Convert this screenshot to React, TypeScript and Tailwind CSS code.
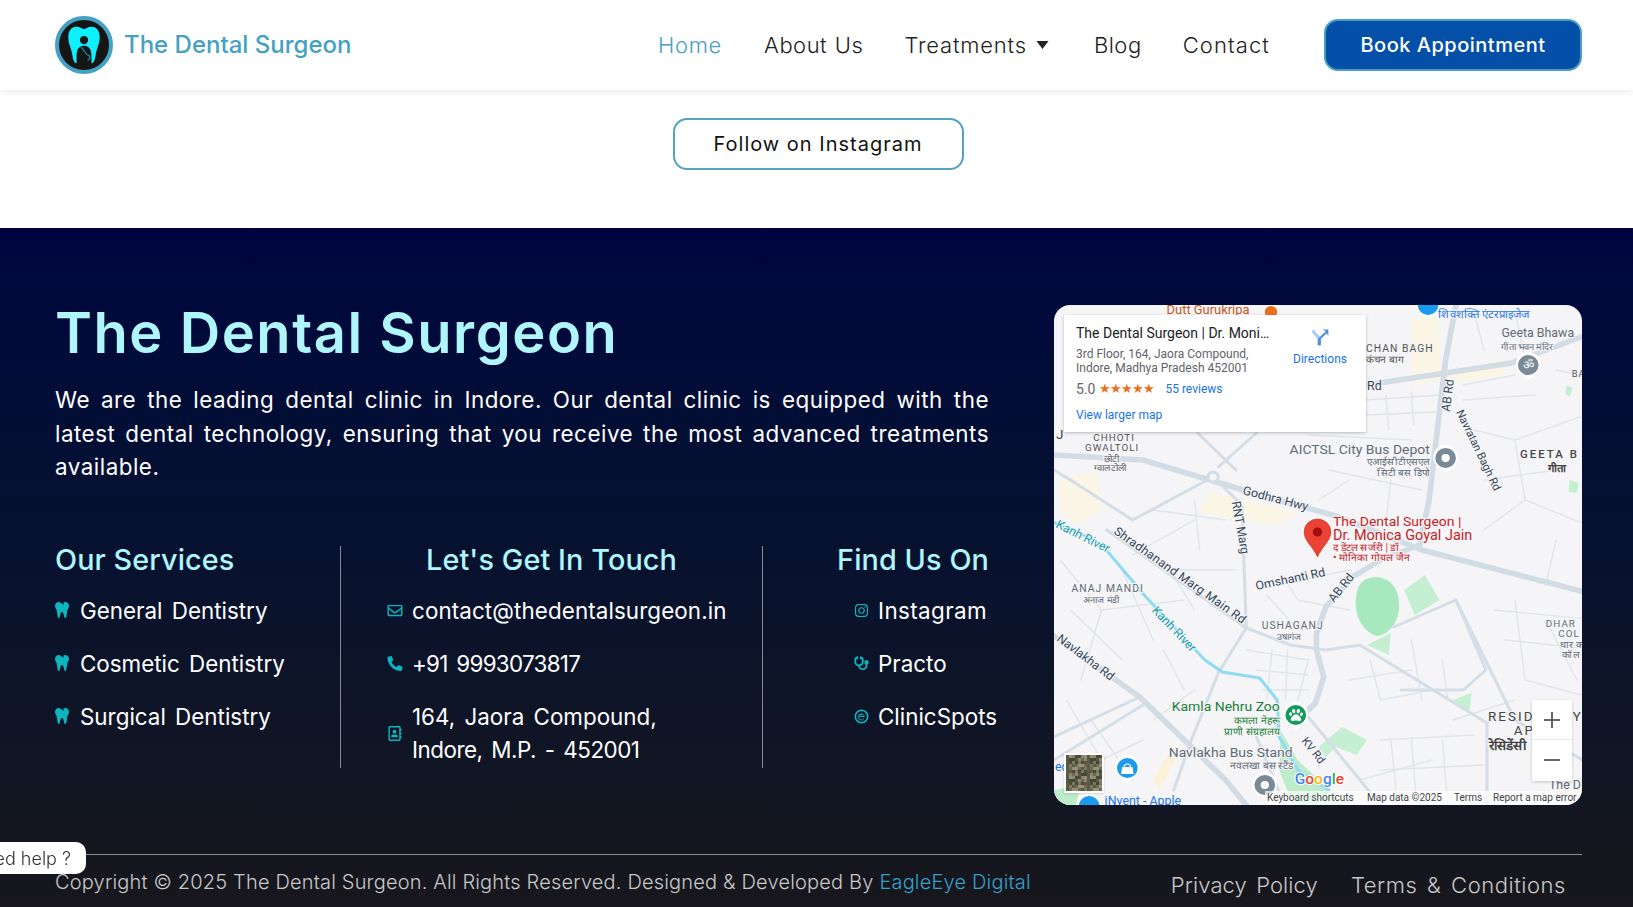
import React from "react";
import { Stethoscope } from "lucide-react";
import { FaInstagram, FaPhoneAlt, FaRegAddressBook, FaRegEnvelope, FaTooth, FaPaw } from "react-icons/fa";

const mainRoads = [
  "M1443 305 L1433 360 L1417 500 L1408 545",
  "M1054 455 L1140 460 L1237 490 L1330 517 L1410 550 L1582 596",
  "M1408 545 L1370 560 L1343 577 L1317 607 L1308 633 L1308 650 L1315 677 L1307 703 L1297 713",
  "M1356 385 L1497 363 L1582 330",
  "M1054 636 L1137 697 L1220 780 L1240 805",
];

const midRoads = [
  "M1105 530 L1240 628 L1283 645 L1317 650 L1350 645 L1473 723 L1473 805",
  "M1240 628 L1213 673 L1187 740 L1170 790",
  "M1250 737 L1277 805",
  "M1054 737 L1137 697",
  "M1054 760 L1140 705",
  "M1193 433 L1230 470 M1250 433 L1213 467",
  "M1208 477 L1130 520 L1070 480 L1054 470",
  "M1208 477 L1236 505 L1240 628",
  "M1383 627 L1443 600 L1472 670 L1450 690 L1390 690",
  "M1297 713 L1370 805",
  "M1443 600 L1500 720 L1582 770",
];

const thinRoads = [
  "M1250 589 L1340 570 M1260 595 L1290 630 M1290 600 L1340 610 M1275 575 L1290 600",
  "M1060 560 L1100 610 L1080 680 M1100 610 L1180 600 M1120 570 L1150 640 M1070 610 L1120 660 M1160 560 L1190 610",
  "M1240 650 L1300 660 L1290 700 M1250 670 L1300 675 M1255 690 L1300 690 M1265 650 L1260 700 M1280 650 L1278 700",
  "M1360 660 L1370 700 L1420 690 M1400 640 L1410 700 M1430 660 L1435 700 M1340 680 L1400 670",
  "M1370 740 L1460 735 M1400 740 L1405 805 M1430 740 L1435 805 M1370 770 L1470 765 M1380 740 L1385 790",
  "M1500 600 L1510 680 L1582 700 M1530 620 L1560 680 M1490 640 L1582 650 M1480 610 L1582 620",
  "M1356 400 L1430 395 M1375 395 L1378 430 M1400 392 L1402 425 M1356 415 L1425 412",
  "M1460 430 L1500 440 L1510 500 L1470 530 M1500 440 L1582 410 M1470 480 L1540 470 M1450 400 L1520 395",
  "M1320 470 L1410 490 M1340 480 L1310 500 M1380 480 L1375 525 M1300 435 L1400 440",
  "M1130 555 L1190 520 M1170 570 L1230 570 M1150 510 L1220 520 M1190 500 L1195 550",
  "M1066 700 L1100 760 L1140 740 M1090 720 L1130 780 M1150 720 L1190 690 M1160 650 L1180 690",
  "M1440 720 L1500 700 M1350 780 L1420 760 M1510 500 L1582 530 M1540 540 L1530 585",
  "M1460 310 L1470 350 M1500 310 L1510 360 M1540 370 L1582 380 M1450 385 L1500 375",
];

type LabelProps = {
  x: number;
  y: number;
  size?: number;
  fill?: string;
  weight?: number;
  spacing?: number;
  rotate?: number;
  end?: boolean;
  children: React.ReactNode;
};

// map labels sit at their spot on the tile, halo keeps them readable over the roads
const Label = ({ x, y, size = 11, fill = "#5f6b76", weight = 400, spacing = 0, rotate = 0, end = false, children }: LabelProps) => (
  <text
    x={x}
    y={y}
    fontSize={size}
    fill={fill}
    fontWeight={weight}
    letterSpacing={spacing}
    textAnchor={end ? "end" : "start"}
    transform={rotate ? `rotate(${rotate} ${x} ${y})` : undefined}
    stroke="#f5f5f7"
    strokeWidth={2}
    paintOrder="stroke"
  >
    {children}
  </text>
);

const Pin = ({ x, y, color }: { x: number; y: number; color: string }) => (
  <g>
    <path d={`M${x} ${y + 15} L${x - 9} ${y + 7} A12 12 0 1 1 ${x + 9} ${y + 7} Z`} fill="#fff" />
    <circle cx={x} cy={y} r={10} fill={color} />
  </g>
);

const ThumbNoise = () => {
  const cells = [];
  const colors = ["#5c5a45", "#7d7760", "#3f4a35", "#8c8570", "#6a6f52", "#4c4a3a", "#9a8f78"];
  for (let r = 0; r < 12; r++) {
    for (let c = 0; c < 12; c++) {
      cells.push(<rect key={`${r}-${c}`} x={c * 3} y={r * 3} width={3} height={3} fill={colors[(r * r * 7 + c * c * 13 + r * c * 3) % 7]} />);
    }
  }
  return (
    <svg viewBox="0 0 36 36" className="h-full w-full">
      {cells}
    </svg>
  );
};

const MapEmbed = () => (
  <div className="relative h-[500px] w-[528px] shrink-0 overflow-hidden rounded-2xl bg-[#f5f5f7] font-[Roboto,sans-serif]">
    <svg viewBox="1054 305 511 500" preserveAspectRatio="none" className="absolute inset-0 h-full w-full">
      {/* land use */}
      <path d="M1060 480 L1095 472 L1100 510 L1075 525 L1060 510 Z" fill="#fbf5e6" />
      <path d="M1205 492 L1290 512 L1270 525 L1195 512 Z" fill="#fbf5e6" />
      <path d="M1400 320 L1425 310 L1430 380 L1400 385 Z" fill="#fbf5e6" />
      <path d="M1430 370 L1490 360 L1490 375 L1430 385 Z" fill="#fbf5e6" />
      <path d="M1150 780 L1170 745 L1176 750 L1156 790 Z" fill="#fbf0d8" />
      <path d="M1346 600 C1347 585 1352 578 1365 577 C1380 578 1388 588 1388 606 C1388 622 1378 635 1366 636 C1354 632 1345 618 1346 600 Z" fill="#a8e8bf" />
      <path d="M1393 590 L1413 575 L1427 600 L1403 615 Z" fill="#c5efd2" />
      <path d="M1357 645 L1380 633 L1378 655 Z" fill="#c5efd2" />
      <path d="M1273 730 L1290 760 L1335 805 L1285 805 L1272 770 Z" fill="#bdeccb" />
      <path d="M1310 747 L1333 727 L1357 740 L1347 755 L1327 747 L1317 757 Z" fill="#c5efd2" />
      <path d="M1054 790 L1080 785 L1075 805 L1054 805 Z" fill="#bdeccb" />
      <path d="M1440 700 L1458 693 L1456 712 Z" fill="#c5efd2" />
      <path d="M1550 385 L1556 388 L1553 397 L1549 394 Z M1553 480 L1562 483 L1560 493 L1552 492 Z" fill="#c5efd2" />

      <g fill="none" strokeLinecap="round" strokeLinejoin="round">
        {thinRoads.map((d) => (
          <path key={d} d={d} stroke="#dfe5ea" strokeWidth={1.4} />
        ))}
        {midRoads.map((d) => (
          <path key={d} d={d} stroke="#d5dee6" strokeWidth={3} />
        ))}
        {mainRoads.map((d) => (
          <path key={d} d={d} stroke="#d2dce5" strokeWidth={5.5} />
        ))}
        <circle cx={1208} cy={477} r={5} stroke="#d2dce5" strokeWidth={3} fill="#f5f5f7" />
        <path
          d="M1053 522 L1093 540 L1107 553 L1143 597 L1200 660 L1217 672 L1253 678 L1270 700 L1272 737 L1290 770 L1320 790"
          stroke="#8fdcf2"
          strokeWidth={3}
        />
      </g>

      <Label x={1163} y={314} size={12.5} fill="#c5591c">Dutt Gurukripa</Label>
      <circle cx={1264} cy={312} r={6} fill="#e8711a" />
      <Label x={1426} y={318} size={11} fill="#1a73e8">शिवशक्ति एंटरप्राइजेज</Label>
      <Label x={1356} y={352} size={10} spacing={1} fill="#555">CHAN BAGH</Label>
      <Label x={1356} y={363} size={10} fill="#555">कंचन बाग</Label>
      <Label x={1487} y={337} size={12}>Geeta Bhawa</Label>
      <Label x={1487} y={350} size={9}>गीता भवन मंदिर</Label>
      <Label x={1555} y={377} size={9} spacing={1} fill="#555">BA</Label>
      <Label x={1357} y={390} size={12} fill="#33475b">Rd</Label>
      <Label x={1437} y={412} size={12} rotate={-83} fill="#33475b">AB Rd</Label>
      <Label x={1443} y={412} size={11} rotate={65} fill="#33475b">Navratan Bagh Rd</Label>
      <Label x={1282} y={454} size={13.5}>AICTSL City Bus Depot</Label>
      <Label x={1418} y={465} size={9.5} end>एआईसीटीएसएल</Label>
      <Label x={1418} y={476} size={9.5} end>सिटी बस डिपो</Label>
      <Label x={1505} y={458} size={11} spacing={2} fill="#444" weight={500}>GEETA B</Label>
      <Label x={1532} y={472} size={11} fill="#444" weight={700}>गीता</Label>
      <Label x={1092} y={441} size={9.5} spacing={1} fill="#555">CHHOTI</Label>
      <Label x={1084} y={451} size={9.5} spacing={1} fill="#555">GWALTOLI</Label>
      <Label x={1102} y={462} size={9} fill="#555">छोटी</Label>
      <Label x={1093} y={471} size={9} fill="#555">ग्वालटोली</Label>
      <Label x={1056} y={439} size={13} fill="#444">J</Label>
      <Label x={1236} y={494} size={12} rotate={15} fill="#33475b">Godhra Hwy</Label>
      <Label x={1226} y={502} size={12} rotate={80} fill="#33475b">RNT Marg</Label>
      <Label x={1055} y={527} size={12} rotate={27} fill="#129eaf">Kanh River</Label>
      <Label x={1111} y={533} size={12} rotate={36} fill="#33475b" spacing={0.3}>Shradhanand Marg Main Rd</Label>
      <Label x={1250} y={590} size={12} rotate={-12} fill="#33475b">Omshanti Rd</Label>
      <Label x={1325} y={603} size={12} rotate={-52} fill="#33475b">AB Rd</Label>
      <Label x={1071} y={592} size={10} spacing={1}>ANAJ MANDI</Label>
      <Label x={1082} y={603} size={9}>अनाज मंडी</Label>
      <Label x={1255} y={629} size={10} spacing={1}>USHAGANJ</Label>
      <Label x={1270} y={640} size={9}>उषागंज</Label>
      <Label x={1530} y={627} size={9.5} spacing={1}>DHAR</Label>
      <Label x={1542} y={637} size={9.5} spacing={1}>COL</Label>
      <Label x={1544} y={648} size={9.5}>धार क</Label>
      <Label x={1546} y={658} size={9.5}>कॉल</Label>
      <Label x={1148} y={611} size={12} rotate={47} fill="#129eaf">Kanh River</Label>
      <Label x={1056} y={640} size={12} rotate={38} fill="#33475b">Navlakha Rd</Label>
      <Label x={1168} y={711} size={13.5} fill="#188038">Kamla Nehru Zoo</Label>
      <Label x={1273} y={724} size={10} end fill="#188038">कमला नेहरू</Label>
      <Label x={1273} y={735} size={10} end fill="#188038">प्राणी संग्रहालय</Label>
      <Label x={1293} y={741} size={11} rotate={52} fill="#33475b">KV Rd</Label>
      <Label x={1474} y={721} size={13} spacing={2} fill="#444">RESID</Label>
      <Label x={1556} y={721} size={13} fill="#444">Y</Label>
      <Label x={1499} y={735} size={13} spacing={2} fill="#444">AP</Label>
      <Label x={1475} y={750} size={13} fill="#444" weight={700}>रेसिडेंसी</Label>
      <Label x={1533} y={789} size={12}>The D</Label>
      <Label x={1165} y={757} size={13.5}>Navlakha Bus Stand</Label>
      <Label x={1285} y={769} size={10} end>नवलखा बस स्टैंड</Label>
      <Label x={1055} y={771} size={12} fill="#1a73e8">ed s</Label>
      <Label x={1103} y={805} size={12} fill="#1a73e8">iNvent - Apple</Label>

      <Pin x={1513} y={365} color="#7b8a97" />
      <text x={1513} y={369} fontSize={12} fill="#fff" textAnchor="middle">ॐ</text>
      <Pin x={1433} y={458} color="#7b8a97" />
      <circle cx={1433} cy={458} r={4} fill="#fff" />
      <Pin x={1258} y={785} color="#7b8a97" />
      <circle cx={1258} cy={785} r={4} fill="#fff" />
      <Pin x={1288} y={715} color="#109c5c" />
      <Pin x={1125} y={768} color="#1a9bf0" />
      <path d="M1120 767 h10 l1 7 h-12 Z" fill="#fff" />
      <path d="M1122 767 a3 3 0 0 1 6 0" fill="none" stroke="#fff" strokeWidth={1.2} />
      <Pin x={1088} y={806} color="#1a9bf0" />
      <Pin x={1416} y={305} color="#1a9bf0" />

      {/* red place marker */}
      <path d="M1309 557 C1305 547 1296 541 1296 532 A13 13 0 1 1 1322 532 C1322 541 1313 547 1309 557 Z" fill="#ea4335" stroke="#c5221f" strokeWidth={0.5} />
      <circle cx={1309} cy={532} r={4.5} fill="#a50e0e" />
      <Label x={1324} y={526} size={13.5} fill="#c5221f">The Dental Surgeon |</Label>
      <Label x={1324} y={540} size={14} fill="#c5221f">Dr. Monica Goyal Jain</Label>
      <Label x={1324} y={551} size={10} fill="#c5221f">द डेंटल सर्जरी | डॉ</Label>
      <Label x={1324} y={561} size={10} fill="#c5221f">• मोनिका गोयल जैन</Label>

      <text x={1287} y={784} fontSize={15} fontWeight={500} stroke="#fff" strokeWidth={2} paintOrder="stroke">
        <tspan fill="#4285f4">G</tspan>
        <tspan fill="#ea4335">o</tspan>
        <tspan fill="#fbbc05">o</tspan>
        <tspan fill="#4285f4">g</tspan>
        <tspan fill="#34a853">l</tspan>
        <tspan fill="#ea4335">e</tspan>
      </text>
    </svg>

    <FaPaw className="absolute left-[235px] top-[403px] h-[14px] w-[14px] text-white" />

    {/* place card */}
    <div className="absolute left-[10px] top-[10px] h-[117px] w-[302px] bg-white pl-3 pt-[10px] shadow-[0_1px_3px_rgba(0,0,0,0.25)]">
      <div className="w-[196px] truncate text-[14px] leading-4 text-[#202124]">The Dental Surgeon | Dr. Monica Goyal Jain</div>
      <div className="mt-[6px] text-[12px] leading-[14px] text-[#5f6368]">
        3rd Floor, 164, Jaora Compound,
        <br />
        Indore, Madhya Pradesh 452001
      </div>
      <div className="mt-[6px] flex items-center text-[12px] leading-4">
        <span className="text-[14px] text-[#5f6368]">5.0</span>
        <span className="ml-1 text-[13px] leading-4 tracking-[-1px] text-[#e7711b]">★★★★★</span>
        <span className="ml-[11px] text-[#1a73e8]">55 reviews</span>
      </div>
      <div className="mt-[10px] text-[12px] leading-4 text-[#1a73e8]">View larger map</div>
      <div className="absolute left-[226px] top-[12px] flex w-[60px] flex-col items-center text-[12px] text-[#1a73e8]">
        <svg viewBox="0 0 24 24" className="h-5 w-5">
          <path d="M4 3 L13 13 V22 H9 V14 L2 6 Z" fill="#a8c7fa" />
          <path d="M9.5 14 L19 5 L15 3 H22 V11 L20 7.5 L13 14.5 V22 H9.5 Z" fill="#4a90e2" />
        </svg>
        <span className="mt-[3px] whitespace-nowrap">Directions</span>
      </div>
    </div>

    {/* satellite thumbnail */}
    <div className="absolute left-[10px] top-[448px] h-[40px] w-[40px] border-2 border-white shadow">
      <ThumbNoise />
    </div>

    {/* zoom buttons */}
    <div className="absolute left-[478px] top-[395px] flex h-[81px] w-[40px] flex-col items-center bg-white shadow-[0_1px_3px_rgba(0,0,0,0.2)]">
      <div className="flex h-10 w-full items-center justify-center border-b border-[#e6e6e6]">
        <svg viewBox="0 0 18 18" className="h-[18px] w-[18px]">
          <path d="M9 1 V17 M1 9 H17" stroke="#666" strokeWidth={2} />
        </svg>
      </div>
      <div className="flex h-10 w-full items-center justify-center">
        <svg viewBox="0 0 18 18" className="h-[18px] w-[18px]">
          <path d="M1 9 H17" stroke="#666" strokeWidth={2} />
        </svg>
      </div>
    </div>

    {/* attribution strip */}
    <div className="absolute bottom-0 right-0 flex h-[14px] w-[317px] items-center whitespace-nowrap bg-white/70 pl-[2px] text-[10px] leading-none text-[#444]">
      <span className="w-[100px]">Keyboard shortcuts</span>
      <span className="w-[87px]">Map data ©2025</span>
      <span className="w-[39px]">Terms</span>
      <span>Report a map error</span>
    </div>
  </div>
);

const ClinicIcon = () => (
  <svg viewBox="0 0 16 16" className="h-[15px] w-[15px] shrink-0 fill-none stroke-[#0cb6bf]">
    <circle cx="8" cy="8" r="6.6" strokeWidth="1.7" />
    <path d="M4.8 8 H11 A3.2 3.2 0 1 0 10.4 10.4 M6 6 H9" strokeWidth="1" />
  </svg>
);

const services = ["General Dentistry", "Cosmetic Dentistry", "Surgical Dentistry"];

const App: React.FC = () => {
  return (
    <div className="h-[907px] overflow-hidden bg-white font-[Inter,sans-serif]">
      {/* Header */}
      <header className="relative z-10 flex h-[90px] items-center bg-white pl-[55px] pr-[51px] shadow-[0_2px_8px_rgba(0,0,0,0.08)]">
        <div className="flex items-center gap-[11px]">
          <div className="flex h-[58px] w-[58px] items-center justify-center rounded-full border-[4px] border-[#44a1c4] bg-[#161616]">
            <svg viewBox="0 0 40 46" className="h-[38px] w-[34px]">
              <path
                d="M11 1 C15 1 17 3 20 4 C23 3 25 1 29 1 C36 1 39 7 39 14 C39 22 35 27 34 36 C33 41 32 45 29 45 C26 45 27 34 20 34 C13 34 14 45 11 45 C8 45 7 41 6 36 C5 27 1 22 1 14 C1 7 4 1 11 1 Z"
                fill="#0ff0ff"
              />
              <circle cx="20" cy="17" r="5" fill="#161616" />
              <path d="M11 36 C11 27 15 24 20 24 C25 24 29 27 29 36 L29 45 L24 45 C24 39 23 36 20 36 C17 36 16 39 16 45 L11 45 Z" fill="#161616" />
              <path d="M16 25 L24 35 M24 35 A3 3 0 1 1 24 41" stroke="#0b8fa0" strokeWidth="1.5" fill="none" />
            </svg>
          </div>
          <span className="text-[24px] font-medium text-[#44a1c4]">The Dental Surgeon</span>
        </div>

        <nav className="ml-auto flex items-center text-[22px] font-light tracking-[0.5px] text-[#222] [word-spacing:3px]">
          <a className="tracking-[0.7px] text-[#44a1c4]">Home</a>
          <a className="ml-[42px] [word-spacing:1px]">About Us</a>
          <a className="ml-[41px] flex items-center tracking-[0.8px]">
            Treatments
            <svg viewBox="0 0 12 8" className="ml-[9px] h-2 w-[13px] fill-[#222]">
              <path d="M0 0 H12 L6 8 Z" />
            </svg>
          </a>
          <a className="ml-[45px]">Blog</a>
          <a className="ml-[41px] tracking-[1.1px]">Contact</a>
          <button className="ml-[54px] h-[52px] w-[258px] rounded-[14px] border-2 border-[#4a9fc0] bg-[#0450a8] text-[20px] font-medium text-white">
            Book Appointment
          </button>
        </nav>
      </header>

      {/* Instagram CTA */}
      <section className="flex h-[138px] items-start justify-center pl-[4px] pr-[1px] pt-[28px]">
        <button className="h-[52px] w-[291px] rounded-[14px] border-2 border-[#54a3bf] bg-white text-[20px] tracking-[1px] text-[#111]">
          Follow on Instagram
        </button>
      </section>

      {/* Footer */}
      <footer className="relative h-[679px] bg-linear-to-b from-[#00053f] to-[#17171c] pl-[55px] pr-[51px] pt-[77px] text-white">
        <div className="flex justify-between">
          <div className="w-[934px]">
            <h2 className="text-[56px] font-semibold leading-[56px] tracking-[1.55px] text-[#aef6fc]">The Dental Surgeon</h2>
            <p className="mt-[22px] text-justify text-[22.4px] leading-[33.6px] tracking-[0.5px] [word-spacing:2px]">
              We are the leading dental clinic in Indore. Our dental clinic is equipped with the latest dental technology, ensuring that you receive the most advanced treatments available.
            </p>

            <div className="mt-[62px] flex h-[222px] text-[22.4px] [word-spacing:3px]">
              <div className="w-[286px] shrink-0 border-r border-[#8a8a92]">
                <h3 className="text-[28.8px] font-medium leading-[28px] tracking-[0.1px] text-[#aef6fc] [word-spacing:0]">Our Services</h3>
                {services.map((s) => (
                  <div key={s} className="mt-[20px] flex items-center gap-[11px] leading-[33px]">
                    <FaTooth className="h-4 w-[14px] text-[#0cb6bf]" />
                    {s}
                  </div>
                ))}
              </div>

              <div className="w-[422px] shrink-0 border-r border-[#8a8a92] pl-[46px]">
                <h3 className="pr-[46px] text-center text-[28.8px] font-medium leading-[28px] tracking-[0.1px] text-[#aef6fc] [word-spacing:0]">Let's Get In Touch</h3>
                <div className="mt-[20px] flex items-center gap-[9px] leading-[33px] tracking-[0.1px]">
                  <FaRegEnvelope className="h-[15px] w-4 text-[#0cb6bf]" />
                  contact@thedentalsurgeon.in
                </div>
                <div className="mt-[20px] flex items-center gap-[9px] leading-[33px] tracking-[-0.7px]">
                  <FaPhoneAlt className="h-[15px] w-4 text-[#0cb6bf]" />
                  +91 9993073817
                </div>
                <div className="mt-[20px] flex items-center gap-[9px] leading-[33.6px]">
                  <FaRegAddressBook className="h-[15px] w-4 text-[#0cb6bf]" />
                  <span>
                    164, Jaora Compound,
                    <br />
                    <span className="tracking-[-0.5px]">Indore, M.P. - 452001</span>
                  </span>
                </div>
              </div>

              <div className="min-w-0 flex-1 whitespace-nowrap">
                <h3 className="text-right text-[28.8px] font-medium leading-[28px] tracking-[0.1px] text-[#aef6fc] [word-spacing:0]">Find Us On</h3>
                <div className="mt-[20px] flex items-center gap-[9px] pl-[91px] leading-[33px] tracking-[0.4px]">
                  <FaInstagram className="h-[15px] w-[15px] text-[#0cb6bf]" />
                  Instagram
                </div>
                <div className="mt-[20px] flex items-center gap-[9px] pl-[91px] leading-[33px]">
                  <Stethoscope className="h-[15px] w-[15px] text-[#0cb6bf]" strokeWidth={3} />
                  Practo
                </div>
                <div className="mt-[20px] flex items-center gap-[9px] pl-[91px] leading-[33px]">
                  <ClinicIcon />
                  ClinicSpots
                </div>
              </div>
            </div>
          </div>

          <MapEmbed />
        </div>

        <div className="mt-[49px] border-t border-[#8a8a8a]" />
        <div className="flex items-start justify-between pr-[16px] pt-[12px] text-[#c8c8c8]">
          <p className="text-[20px] font-light leading-[30px] tracking-[0.18px]">
            Copyright © 2025 The Dental Surgeon. All Rights Reserved. Designed &amp; Developed By <a className="text-[#3a9fc8]">EagleEye Digital</a>
          </p>
          <div className="mt-[2px] flex gap-[33px] text-[22px] font-light leading-[33px] [word-spacing:3px]">
            <a className="tracking-[0.1px]">Privacy Policy</a>
            <a className="tracking-[0.55px]">Terms &amp; Conditions</a>
          </div>
        </div>
      </footer>

      {/* help bubble, pushed half off the left edge */}
      <div className="fixed left-[-30px] top-[842px] z-20 flex h-[32px] w-[116px] items-center justify-end whitespace-nowrap rounded-[10px] bg-white pr-[15px] text-[18px] font-light text-[#333]">
        Need help ?
      </div>
    </div>
  );
};

export default App;
